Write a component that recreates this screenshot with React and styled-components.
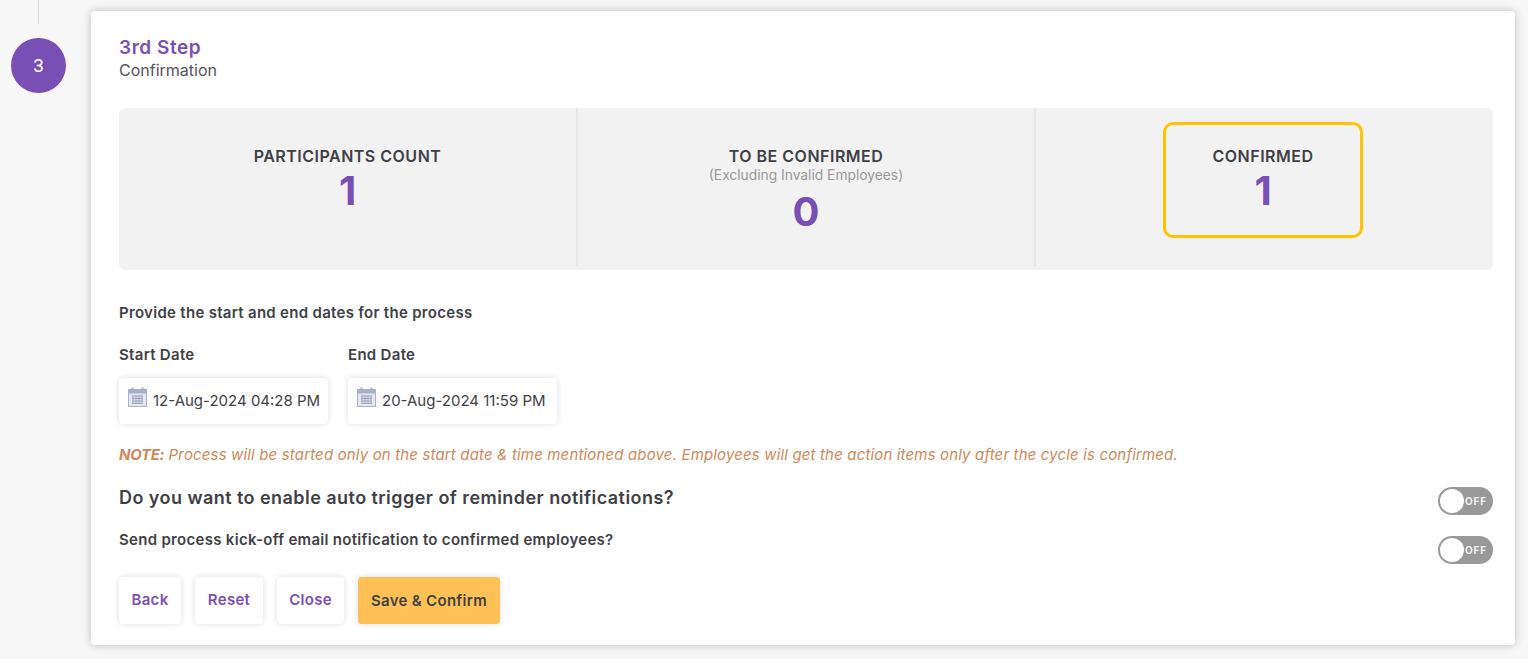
import React from "react";
import styled, { createGlobalStyle } from "styled-components";

const purple = "#7a4fb5";
const ink = "#3f3f46";

const dates = [
  { label: "Start Date", value: "12-Aug-2024 04:28 PM" },
  { label: "End Date", value: "20-Aug-2024 11:59 PM" },
];

function CalendarIcon() {
  return (
    <svg width="19" height="20" viewBox="0 0 19 20" fill="none">
      <rect x="0.5" y="2.5" width="18" height="17" fill="#e6e8f0" stroke="#a9b1c9" />
      <rect x="0.5" y="2.5" width="18" height="4" fill="#a9b1c9" />
      <rect x="3.5" y="0.5" width="2" height="4" fill="#a9b1c9" />
      <rect x="13.5" y="0.5" width="2" height="4" fill="#a9b1c9" />
      <path
        d="M4 9h11M4 11.5h11M4 14h11M4 16.5h11M5 8.5v8.5M8 8.5v8.5M11 8.5v8.5M14 8.5v8.5"
        stroke="#9aa3bd"
        strokeWidth="1"
      />
    </svg>
  );
}

function App() {
  return (
    <>
      <GlobalStyle />
      <Page>
        <Rail>
          <RailLine />
          <StepCircle>3</StepCircle>
        </Rail>
        <Card>
          <StepTitle>3rd Step</StepTitle>
          <StepSub>Confirmation</StepSub>
          <Stats>
            <StatCell>
              <StatBox>
                <StatLabel>PARTICIPANTS COUNT</StatLabel>
                <StatValue>1</StatValue>
              </StatBox>
            </StatCell>
            <StatCell>
              <StatBox>
                <StatLabel>TO BE CONFIRMED</StatLabel>
                <StatHint>(Excluding Invalid Employees)</StatHint>
                <StatValue>0</StatValue>
              </StatBox>
            </StatCell>
            <StatCell>
              <StatBox $highlight>
                <StatLabel>CONFIRMED</StatLabel>
                <StatValue>1</StatValue>
              </StatBox>
            </StatCell>
          </Stats>
          <Prompt>Provide the start and end dates for the process</Prompt>
          <DateRow>
            {dates.map((item) => {
              return (
                <DateGroup key={item.label}>
                  <DateLabel>{item.label}</DateLabel>
                  <DateField>
                    <CalendarIcon />
                    <span>{item.value}</span>
                  </DateField>
                </DateGroup>
              );
            })}
          </DateRow>
          <Note>
            <b>NOTE:</b> Process will be started only on the start date &amp; time mentioned above.
            Employees will get the action items only after the cycle is confirmed.
          </Note>
          <ToggleRow $gap={19}>
            <Question>Do you want to enable auto trigger of reminder notifications?</Question>
            <Toggle $top={3}>
              <Knob />
              <ToggleText>OFF</ToggleText>
            </Toggle>
          </ToggleRow>
          <ToggleRow $gap={8}>
            <SmallQuestion>Send process kick-off email notification to confirmed employees?</SmallQuestion>
            <Toggle $top={13}>
              <Knob />
              <ToggleText>OFF</ToggleText>
            </Toggle>
          </ToggleRow>
          <Actions>
            <ActionButton $width={62}>Back</ActionButton>
            <ActionButton $width={68}>Reset</ActionButton>
            <ActionButton $width={67}>Close</ActionButton>
            <SaveButton>Save &amp; Confirm</SaveButton>
          </Actions>
        </Card>
      </Page>
    </>
  );
}

const GlobalStyle = createGlobalStyle`
  html, body {
    margin: 0;
    height: 659px;
    overflow: hidden;
    background: #f7f7f7;
  }
  * {
    box-sizing: border-box;
  }
`;
const Page = styled.div`
  display: flex;
  align-items: flex-start;
  gap: 25px;
  width: 1528px;
  height: 659px;
  padding: 0 13px 0 11px;
  font-family: "Inter", "Liberation Sans", sans-serif;
  color: ${ink};
`;
const Rail = styled.div`
  display: flex;
  flex-direction: column;
  align-items: center;
  flex: 0 0 55px;
`;
const RailLine = styled.div`
  width: 1px;
  height: 24px;
  margin-bottom: 14px;
  background: #d9d9d9;
`;
const StepCircle = styled.div`
  display: flex;
  align-items: center;
  justify-content: center;
  width: 55px;
  height: 55px;
  border-radius: 50%;
  background: ${purple};
  color: #fff;
  font-family: "Roboto", sans-serif;
  font-size: 19px;
`;
const Card = styled.div`
  flex: 1;
  height: 634px;
  margin-top: 11px;
  padding: 26px 22px 0 28px;
  background: #fff;
  border-radius: 4px;
  box-shadow: 0 0 8px rgba(0, 0, 0, 0.24);
`;
const StepTitle = styled.div`
  font-size: 19px;
  line-height: 22px;
  font-weight: 600;
  letter-spacing: 0.55px;
  color: ${purple};
`;
const StepSub = styled.div`
  margin-top: 1px;
  font-size: 16px;
  line-height: 20px;
  color: #55555c;
`;
const Stats = styled.div`
  display: grid;
  grid-template-columns: 459px 458px 1fr;
  height: 162px;
  margin-top: 28px;
  background: #f2f2f2;
  border-radius: 6px;
`;
const StatCell = styled.div`
  display: flex;
  justify-content: center;
  padding-top: 14px;
  &:not(:last-child) {
    border-right: 2px solid #e6e6e6;
    margin-bottom: 4px;
  }
  &:last-child {
    padding-right: 3px;
  }
`;
const StatBox = styled.div`
  display: flex;
  flex-direction: column;
  align-items: center;
  width: 200px;
  height: 116px;
  padding-top: 21px;
  border-radius: 10px;
  border: 3px solid ${(props) => (props.$highlight ? "#ffc400" : "transparent")};
`;
const StatLabel = styled.div`
  font-size: 16px;
  line-height: 20px;
  font-weight: 600;
  white-space: nowrap;
  letter-spacing: 0.5px;
`;
const StatHint = styled.div`
  margin-bottom: 3px;
  font-size: 13.8px;
  line-height: 18px;
  color: #999;
  white-space: nowrap;
`;
const StatValue = styled.div`
  margin-top: 1px;
  font-size: 40px;
  line-height: 48px;
  font-weight: 700;
  color: ${purple};
`;
const Prompt = styled.div`
  margin-top: 33px;
  font-size: 15px;
  line-height: 20px;
  font-weight: 600;
  letter-spacing: 0.3px;
`;
const DateRow = styled.div`
  display: flex;
  gap: 20px;
  margin-top: 22px;
`;
const DateGroup = styled.div`
  display: flex;
  flex-direction: column;
`;
const DateLabel = styled.div`
  font-size: 15px;
  line-height: 20px;
  font-weight: 600;
  letter-spacing: 0.3px;
`;
const DateField = styled.div`
  display: flex;
  align-items: center;
  gap: 6px;
  width: 209px;
  height: 46px;
  margin-top: 13px;
  padding: 0 0 2px 9px;
  background: #fff;
  border-radius: 4px;
  box-shadow: 0 0 6px rgba(0, 0, 0, 0.14);
  font-size: 15px;
  white-space: nowrap;
  svg {
    margin-top: -7px;
    flex: none;
  }
`;
const Note = styled.div`
  margin-top: 21px;
  font-size: 15px;
  line-height: 20px;
  font-style: italic;
  letter-spacing: 0.155px;
  color: #d3875a;
  white-space: nowrap;
  b {
    letter-spacing: -0.3px;
  }
`;
const ToggleRow = styled.div`
  display: flex;
  justify-content: space-between;
  align-items: flex-start;
  margin-top: ${(props) => props.$gap}px;
`;
const Question = styled.div`
  font-size: 18px;
  line-height: 28px;
  font-weight: 600;
  letter-spacing: 0.45px;
`;
const SmallQuestion = styled.div`
  margin-top: 7px;
  font-size: 15px;
  line-height: 20px;
  font-weight: 600;
  letter-spacing: 0.3px;
`;
const Toggle = styled.div`
  display: flex;
  align-items: center;
  flex: none;
  width: 55px;
  height: 28px;
  padding: 0 2px;
  margin-top: ${(props) => props.$top}px;
  border-radius: 14px;
  background: #999;
`;
const Knob = styled.div`
  width: 24px;
  height: 24px;
  border-radius: 50%;
  background: #fff;
`;
const ToggleText = styled.span`
  margin-left: 1px;
  font-size: 10px;
  font-weight: 700;
  letter-spacing: 0.8px;
  color: #f2f2f2;
`;
const Actions = styled.div`
  display: flex;
  gap: 14px;
  margin-top: 13px;
`;
const ActionButton = styled.button`
  width: ${(props) => props.$width}px;
  height: 47px;
  padding: 0 0 2px;
  border: 0;
  border-radius: 4px;
  background: #fff;
  box-shadow: 0 0 6px rgba(0, 0, 0, 0.14);
  font-family: inherit;
  font-size: 15px;
  font-weight: 600;
  letter-spacing: 0.3px;
  color: ${purple};
`;
const SaveButton = styled(ActionButton)`
  width: 142px;
  padding: 0;
  background: #ffc155;
  color: ${ink};
`;

export default App;
